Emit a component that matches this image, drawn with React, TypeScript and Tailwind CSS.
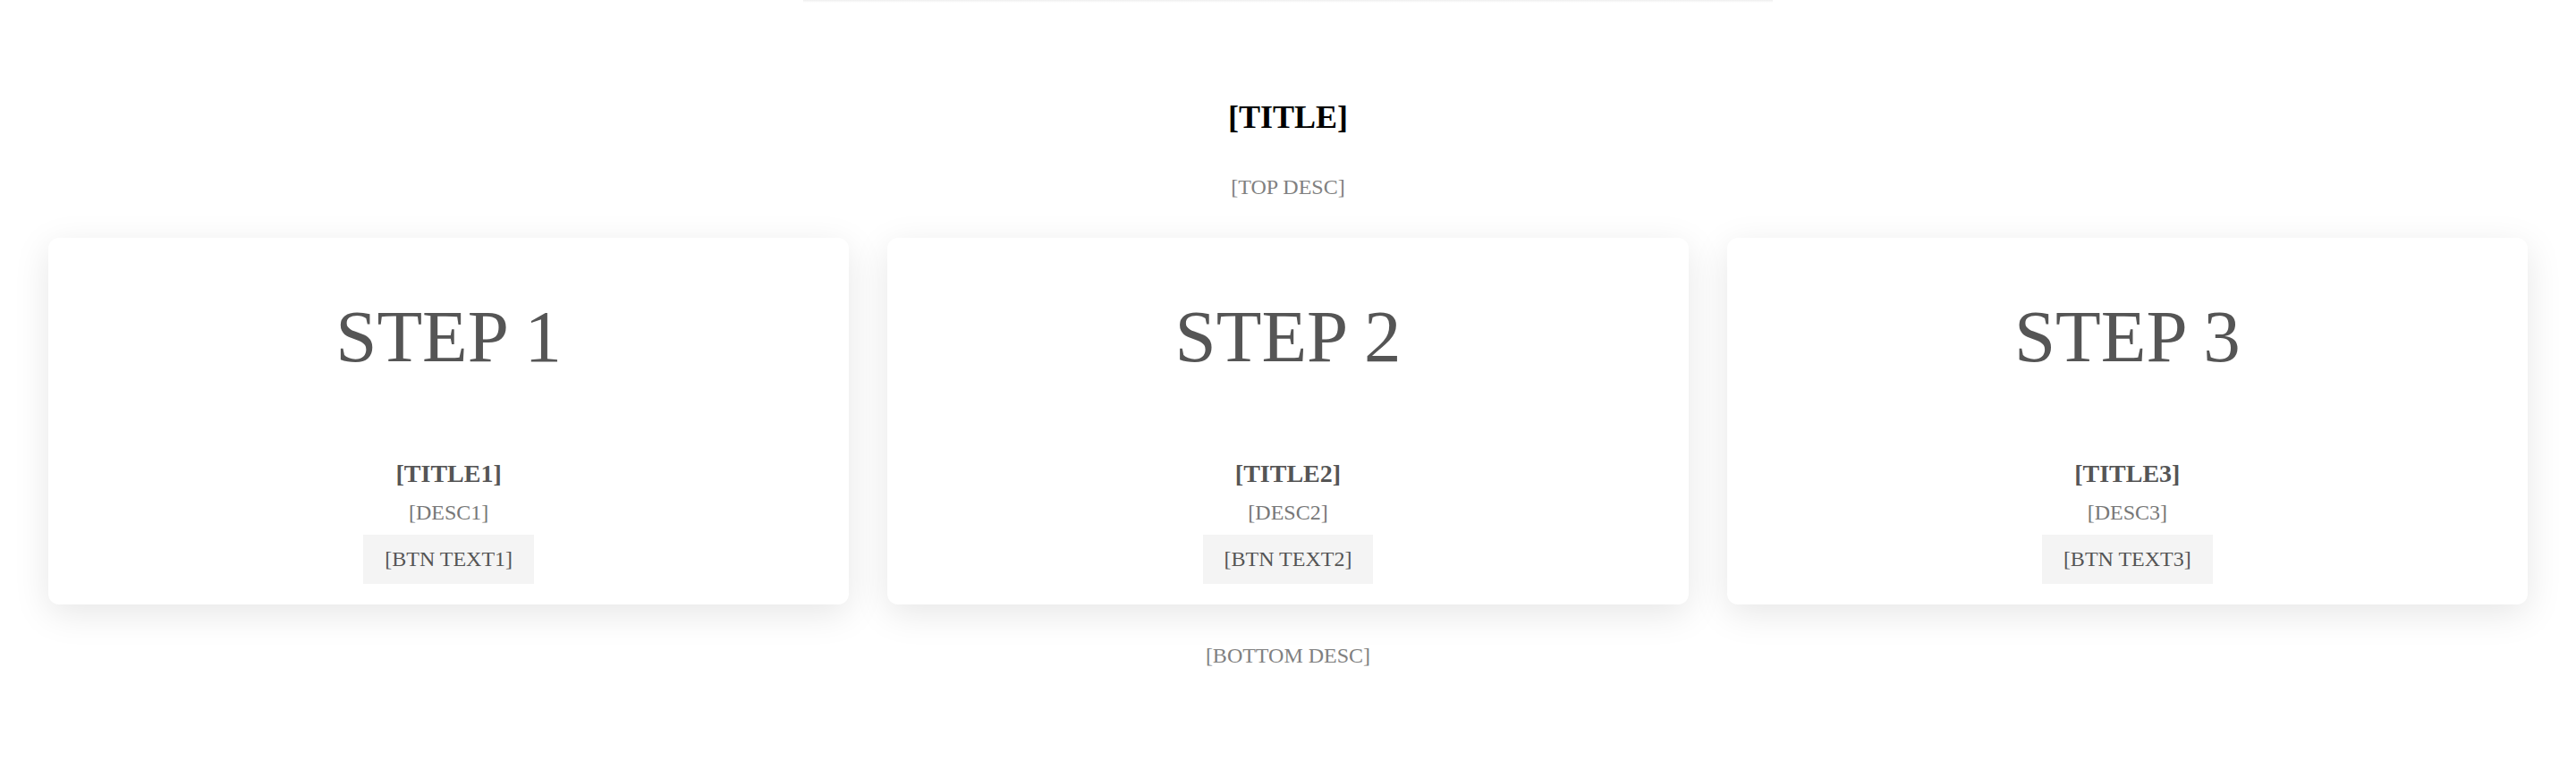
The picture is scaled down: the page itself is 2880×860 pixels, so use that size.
import React from "react";

const steps = [
  { step: "STEP 1", title: "[TITLE1]", desc: "[DESC1]", btn: "[BTN TEXT1]" },
  { step: "STEP 2", title: "[TITLE2]", desc: "[DESC2]", btn: "[BTN TEXT2]" },
  { step: "STEP 3", title: "[TITLE3]", desc: "[DESC3]", btn: "[BTN TEXT3]" },
];

const App = () => {
  return (
    <div className="w-full min-h-[860px] bg-white font-['Liberation_Serif','Times_New_Roman',serif]">
      {/* faint shadow of the bar above */}
      <div className="mx-auto h-[3px] w-[1084px] bg-gradient-to-b from-[#efefef] to-white"></div>

      <section className="flex flex-col items-center pt-[107px]">
        <h2 className="text-[36px] font-bold leading-[1.2] text-black">[TITLE]</h2>
        <p className="mt-[42px] text-[24px] leading-[1.2] text-[#808080]">[TOP DESC]</p>

        {/* Steps */}
        <div className="mt-[42px] grid w-full grid-cols-3 gap-[43px] px-[54px]">
          {steps.map((s) => (
            <div
              key={s.step}
              className="flex flex-col items-center rounded-xl bg-white pt-[69px] pb-[23px] shadow-[0_10px_40px_rgba(0,0,0,0.1)]"
            >
              <div className="text-[83px] leading-none text-[#555555]">{s.step}</div>
              <h3 className="mt-[95px] text-[28px] font-bold leading-[1.2] text-[#555555]">{s.title}</h3>
              <p className="mt-[12px] text-[24px] leading-[1.2] text-[#777777]">{s.desc}</p>
              <button className="mt-[11px] flex h-[55px] items-center bg-[#f4f4f4] px-6 text-[24px] leading-[1.2] text-[#555555]">
                {s.btn}
              </button>
            </div>
          ))}
        </div>

        <p className="mt-[43px] text-[24px] leading-[1.2] text-[#808080]">[BOTTOM DESC]</p>
      </section>
    </div>
  );
};

export default App;
